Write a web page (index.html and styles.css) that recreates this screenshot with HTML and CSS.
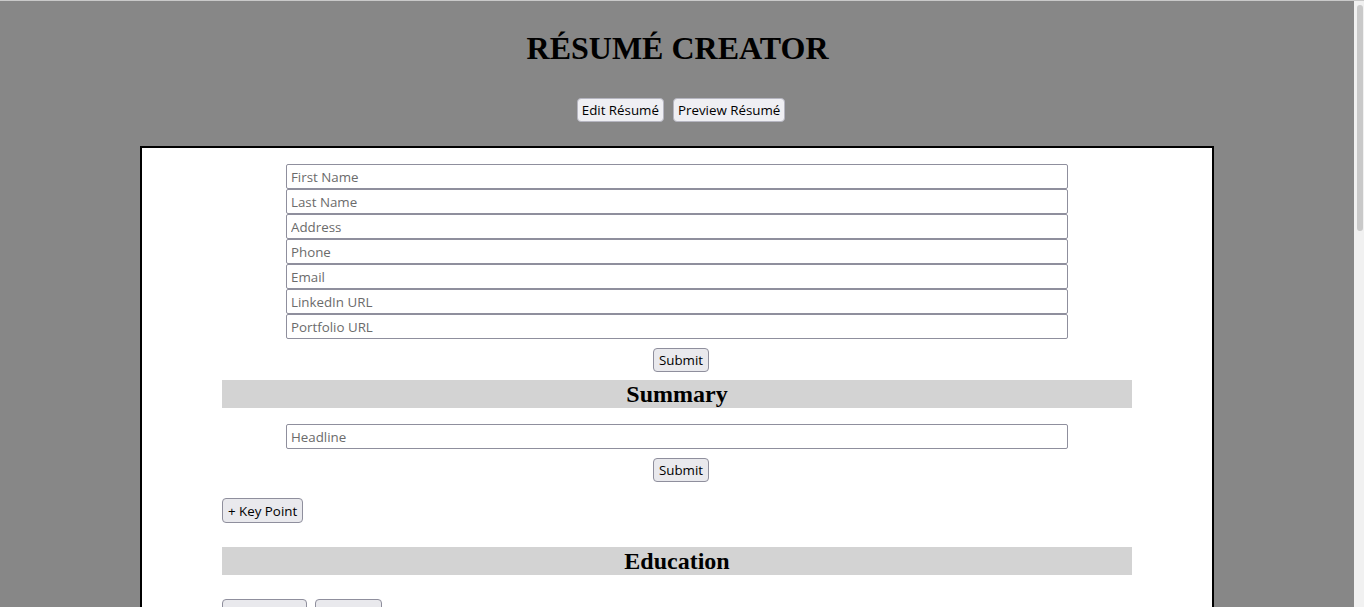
FILE: index.html
```html
<!DOCTYPE html>
<html lang="en">
<head>
<meta charset="utf-8">
<title>Résumé Creator</title>
<link rel="stylesheet" href="styles.css">
</head>
<body>
<header class="top">
  <h1 class="title">RÉSUMÉ CREATOR</h1>
  <nav class="tabs">
    <button class="btn">Edit Résumé</button>
    <button class="btn">Preview Résumé</button>
  </nav>
</header>
<main class="sheet">
  <form class="fields">
    <input class="field" placeholder="First Name">
    <input class="field" placeholder="Last Name">
    <input class="field" placeholder="Address">
    <input class="field" placeholder="Phone">
    <input class="field" placeholder="Email">
    <input class="field" placeholder="LinkedIn URL">
    <input class="field" placeholder="Portfolio URL">
    <div class="submit-row"><button type="button" class="btn">Submit</button></div>
  </form>
  <section class="section">
    <h2 class="section-title">Summary</h2>
    <form class="fields fields-gap">
      <input class="field" placeholder="Headline">
      <div class="submit-row"><button type="button" class="btn">Submit</button></div>
    </form>
    <div class="actions"><button class="btn">+ Key Point</button></div>
  </section>
  <section class="section section-gap">
    <h2 class="section-title">Education</h2>
    <div class="actions actions-gap">
      <button class="btn">+ Education</button>
      <button class="btn">+ Course</button>
    </div>
  </section>
  <section class="section section-gap">
    <h2 class="section-title">Experience</h2>
    <div class="actions actions-gap">
      <button class="btn">+ Experience</button>
    </div>
  </section>
</main>
<div class="scrollbar" aria-hidden="true"><div class="scrollbar-thumb"></div></div>
</body>
</html>
```

FILE: styles.css
```css
html, body {
  margin: 0;
  padding: 0;
}
html {
  border-top: 1px solid #c9c9c9;
  background: #878787;
}
body {
  background: #878787;
  font-family: "Liberation Serif", "Times New Roman", serif;
  color: #000;
  padding: 0 18px 40px 8px;
}
.top {
  display: flex;
  flex-direction: column;
  align-items: center;
}
.title {
  margin: 29px 0 0;
  font-size: 32px;
  line-height: 37px;
  font-weight: bold;
  padding-left: 1px;
}
.tabs {
  display: flex;
  gap: 9px;
  margin-top: 31px;
  padding-left: 8px;
}
.btn {
  font-family: "Open Sans", "Noto Sans", sans-serif;
  font-size: 13.33px;
  height: 24px;
  padding: 0 5px;
  background: #e9e9ed;
  border: 1px solid #8f8f9d;
  border-radius: 4px;
  color: #000;
  box-sizing: border-box;
  line-height: 20px;
}
.tabs .btn {
  background: #efeff3;
  border-color: #b5b5c0;
  padding: 0 4px;
}
.sheet {
  width: 80%;
  margin: 24px auto 0;
  background: #fff;
  border: 2px solid #000;
  padding: 16px 0 40px;
  min-height: 700px;
}
.fields {
  display: flex;
  flex-direction: column;
  align-items: center;
}
.fields-gap {
  margin-top: 16px;
}
.field {
  width: 782px;
  height: 25px;
  box-sizing: border-box;
  border: 1px solid #8f8f9d;
  border-radius: 2px;
  padding: 1px 4px;
  font-family: "Open Sans", "Noto Sans", sans-serif;
  font-size: 13.33px;
  color: #000;
  background: #fff;
}
.field::placeholder {
  color: #6b6b6b;
  opacity: 1;
}
.submit-row {
  display: flex;
  justify-content: center;
  margin-top: 9px;
  padding-left: 8px;
}
.section {
  width: 910px;
  margin: 8px auto 0;
}
.section-gap {
  margin-top: 24px;
}
.section-title {
  margin: 0;
  background: #d3d3d3;
  text-align: center;
  font-size: 24px;
  line-height: 28px;
  font-weight: bold;
}
.actions {
  display: flex;
  gap: 8px;
  margin-top: 16px;
}
.actions .btn {
  height: 25px;
}
.actions-gap {
  margin-top: 24px;
}
.scrollbar {
  position: fixed;
  top: 1px;
  right: 0;
  bottom: 0;
  width: 10px;
  background: #f1f1f1;
}
.scrollbar-thumb {
  margin: 4px 1px 0 3px;
  height: 226px;
  border-radius: 3px;
  background: #c9c9c9;
}
```
